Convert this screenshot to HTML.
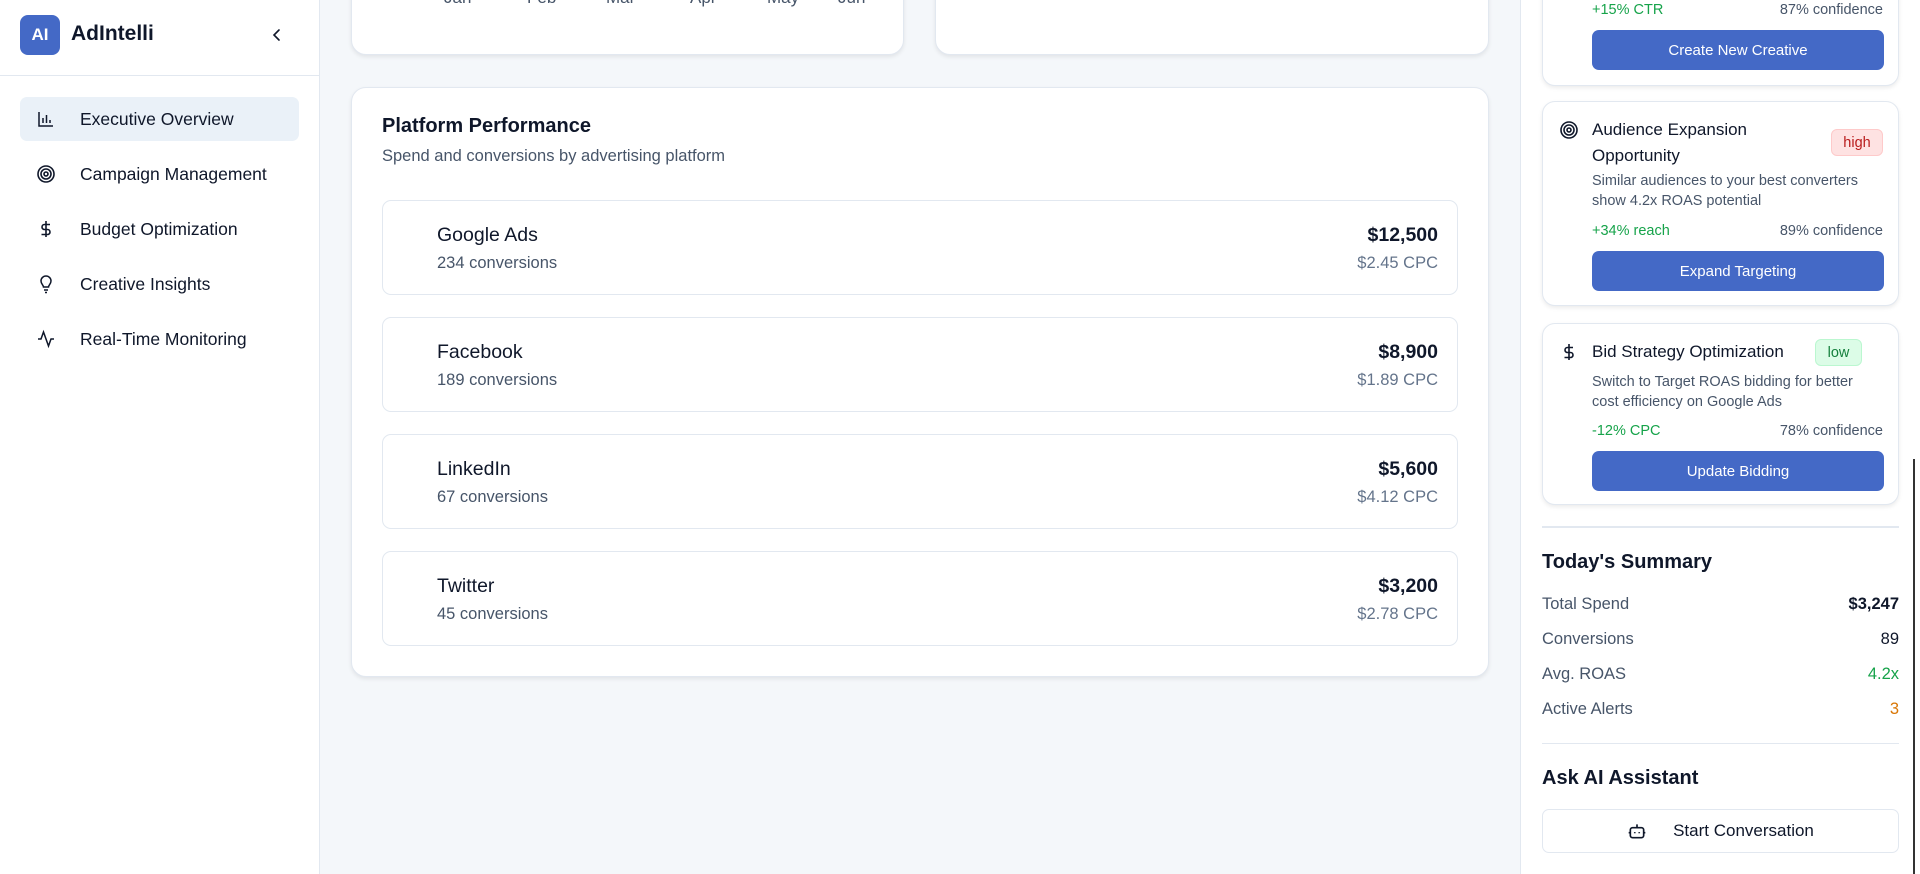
<!DOCTYPE html>
<html><head><meta charset="utf-8"><style>
*{box-sizing:border-box;margin:0;padding:0}
body{width:1920px;height:874px;overflow:hidden;background:#f4f7fa;font-family:"Liberation Sans",sans-serif;color:#0f172a;position:relative}
.abs{position:absolute}
.side{left:0;top:0;width:320px;height:874px;background:#fff;border-right:1px solid #e2e8f0}
.logo{left:20px;top:15px;width:40px;height:40px;border-radius:8px;background:#4469c6;color:#fff;font-weight:bold;font-size:17px;display:flex;align-items:center;justify-content:center}
.brand{left:71px;top:22px;font-size:21px;font-weight:bold}
.nav{left:20px;width:279px;height:44px;border-radius:7px;display:flex;align-items:center;font-size:17.5px;color:#0f172a}
.nav svg{position:absolute;left:16px}
.nav span{position:absolute;left:60px}
.card{background:#fff;border:1px solid #e2e8f0;border-radius:15px;box-shadow:0 2px 4px rgba(0,0,0,.08)}
.row{left:382px;width:1076px;height:95px;border:1px solid #e2e8f0;border-radius:9px;background:#fff}
.row .n{position:absolute;left:54px;top:23px;font-size:19.5px}
.row .c{position:absolute;left:54px;top:53px;font-size:16.5px;color:#475569}
.row .v{position:absolute;right:19px;top:23px;font-size:19.5px;font-weight:bold}
.row .p{position:absolute;right:19px;top:53px;font-size:16.5px;color:#64748b}
.mon{top:-12px;font-size:17px;color:#475569}
.rp{left:1520px;top:0;width:400px;height:874px;background:#fff;border-left:1px solid #e2e8f0}
.rc{left:1542px;width:357px;background:#fff;border:1px solid #e2e8f0;border-radius:13px;box-shadow:0 2px 4px rgba(0,0,0,.08)}
.btn{position:absolute;left:49px;width:292px;height:40px;border-radius:7px;background:#4469c6;color:#fff;font-size:15px;display:flex;align-items:center;justify-content:center}
.t{position:absolute;left:49px;font-size:17px;line-height:26px}
.d{position:absolute;left:49px;font-size:14.5px;line-height:20px;color:#475569}
.g{position:absolute;left:49px;font-size:14.5px;color:#16a34a}
.cf{position:absolute;right:15px;font-size:14.5px;color:#475569}
.sr{left:1542px;width:357px;font-size:16.5px;color:#475569}
.sr b{position:absolute;right:0;font-weight:normal;color:#0f172a}
</style></head><body>
<div class="abs side"></div>
<div class="abs logo">AI</div>
<div class="abs brand">AdIntelli</div>
<svg class="abs" style="left:270px;top:27px" width="14" height="16" viewBox="0 0 14 16"><path d="M9 3L4 8l5 5" fill="none" stroke="#0f172a" stroke-width="1.6" stroke-linecap="round"/></svg>
<div class="abs" style="left:0;top:75px;width:320px;height:1px;background:#e2e8f0"></div>
<div class="abs nav" style="top:97px;background:#eaf1f8"><svg width="20" height="20" viewBox="0 0 20 20" fill="none" stroke="#0f172a" stroke-width="1.5"><path d="M3 3v14h14M7 14V9M10.5 14V6M14 14v-3"/></svg><span>Executive Overview</span></div>
<div class="abs nav" style="top:152px"><svg width="20" height="20" viewBox="0 0 20 20" fill="none" stroke="#0f172a" stroke-width="1.6"><circle cx="10" cy="10" r="8"/><circle cx="10" cy="10" r="5"/><circle cx="10" cy="10" r="2"/></svg><span>Campaign Management</span></div>
<div class="abs nav" style="top:207px"><svg width="20" height="20" viewBox="0 0 20 20" fill="none" stroke="#0f172a" stroke-width="1.6"><path d="M10 2v16M14 5.5H8.5a2.5 2.5 0 0 0 0 5h3a2.5 2.5 0 0 1 0 5H5.5"/></svg><span>Budget Optimization</span></div>
<div class="abs nav" style="top:262px"><svg width="20" height="20" viewBox="0 0 20 20" fill="none" stroke="#0f172a" stroke-width="1.5"><path d="M7.5 13c0-2-2.5-3-2.5-6a5 5 0 0 1 10 0c0 3-2.5 4-2.5 6zM8 16h4M9 18.5h2"/></svg><span>Creative Insights</span></div>
<div class="abs nav" style="top:317px"><svg width="20" height="20" viewBox="0 0 20 20" fill="none" stroke="#0f172a" stroke-width="1.5"><path d="M2 10h3l2.5-7 5 14 2.5-7h3"/></svg><span>Real-Time Monitoring</span></div>

<div class="abs card" style="left:351px;top:-20px;width:553px;height:75px"></div>
<div class="abs card" style="left:935px;top:-20px;width:554px;height:75px"></div>
<div class="abs mon" style="left:444px">Jan</div><div class="abs mon" style="left:527px">Feb</div><div class="abs mon" style="left:606px">Mar</div><div class="abs mon" style="left:690px">Apr</div><div class="abs mon" style="left:767px">May</div><div class="abs mon" style="left:838px">Jun</div>

<div class="abs card" style="left:351px;top:87px;width:1138px;height:590px"></div>
<div class="abs" style="left:382px;top:115px;font-size:20px;font-weight:bold">Platform Performance</div>
<div class="abs" style="left:382px;top:147px;font-size:16.5px;color:#475569">Spend and conversions by advertising platform</div>
<div class="abs row" style="top:200px"><div class="n">Google Ads</div><div class="c">234 conversions</div><div class="v">$12,500</div><div class="p">$2.45 CPC</div></div>
<div class="abs row" style="top:317px"><div class="n">Facebook</div><div class="c">189 conversions</div><div class="v">$8,900</div><div class="p">$1.89 CPC</div></div>
<div class="abs row" style="top:434px"><div class="n">LinkedIn</div><div class="c">67 conversions</div><div class="v">$5,600</div><div class="p">$4.12 CPC</div></div>
<div class="abs row" style="top:551px"><div class="n">Twitter</div><div class="c">45 conversions</div><div class="v">$3,200</div><div class="p">$2.78 CPC</div></div>

<div class="abs rp"></div>
<div class="abs" style="left:1913px;top:459px;width:2px;height:415px;background:#333"></div>
<div class="abs rc" style="top:-20px;height:106px">
 <div class="g" style="top:21px">+15% CTR</div><div class="cf" style="top:21px">87% confidence</div>
 <div class="btn" style="top:49px">Create New Creative</div>
</div>
<div class="abs rc" style="top:101px;height:205px">
 <svg style="position:absolute;left:16px;top:18px" width="20" height="20" viewBox="0 0 20 20" fill="none" stroke="#0f172a" stroke-width="1.6"><circle cx="10" cy="10" r="8"/><circle cx="10" cy="10" r="5"/><circle cx="10" cy="10" r="2"/></svg>
 <div class="t" style="top:15px">Audience Expansion<br>Opportunity</div>
 <div class="abs" style="right:15px;top:27px;width:52px;height:27px;border-radius:6px;background:#fee2e2;border:1px solid #fecaca;color:#b91c1c;font-size:14.5px;display:flex;align-items:center;justify-content:center">high</div>
 <div class="d" style="top:69px">Similar audiences to your best converters<br>show 4.2x ROAS potential</div>
 <div class="g" style="top:121px">+34% reach</div><div class="cf" style="top:121px">89% confidence</div>
 <div class="btn" style="top:149px">Expand Targeting</div>
</div>
<div class="abs rc" style="top:323px;height:182px">
 <svg style="position:absolute;left:16px;top:18px" width="20" height="20" viewBox="0 0 20 20" fill="none" stroke="#0f172a" stroke-width="1.6"><path d="M10 2v16M14 5.5H8.5a2.5 2.5 0 0 0 0 5h3a2.5 2.5 0 0 1 0 5H5.5"/></svg>
 <div class="t" style="top:15px">Bid Strategy Optimization</div>
 <div class="abs" style="left:272px;top:15px;width:47px;height:27px;border-radius:6px;background:#dcfce7;border:1px solid #bbf7d0;color:#15803d;font-size:14.5px;display:flex;align-items:center;justify-content:center">low</div>
 <div class="d" style="top:48px">Switch to Target ROAS bidding for better<br>cost efficiency on Google Ads</div>
 <div class="g" style="top:99px">-12% CPC</div><div class="cf" style="top:99px">78% confidence</div>
 <div class="btn" style="top:127px">Update Bidding</div>
</div>
<div class="abs" style="left:1542px;top:526px;width:357px;height:2px;background:#e2e8f0"></div>
<div class="abs" style="left:1542px;top:551px;font-size:20px;font-weight:bold">Today's Summary</div>
<div class="abs sr" style="top:595px">Total Spend<b style="font-weight:bold">$3,247</b></div>
<div class="abs sr" style="top:630px">Conversions<b>89</b></div>
<div class="abs sr" style="top:665px">Avg. ROAS<b style="color:#16a34a">4.2x</b></div>
<div class="abs sr" style="top:700px">Active Alerts<b style="color:#d97706">3</b></div>
<div class="abs" style="left:1542px;top:743px;width:357px;height:1px;background:#e2e8f0"></div>
<div class="abs" style="left:1542px;top:767px;font-size:20px;font-weight:bold">Ask AI Assistant</div>
<div class="abs" style="left:1542px;top:809px;width:357px;height:44px;border:1px solid #e2e8f0;border-radius:7px;background:#fff;display:flex;align-items:center;justify-content:center;font-size:17px">
 <svg width="20" height="20" viewBox="0 0 18 18" fill="none" stroke="#0f172a" stroke-width="1.5" style="margin-right:26px"><rect x="3" y="6" width="12" height="9" rx="2"/><path d="M9 6V3M1.5 10.5h1.5M15 10.5h1.5M7 10v1M11 10v1"/></svg>Start Conversation
</div>
</body></html>
